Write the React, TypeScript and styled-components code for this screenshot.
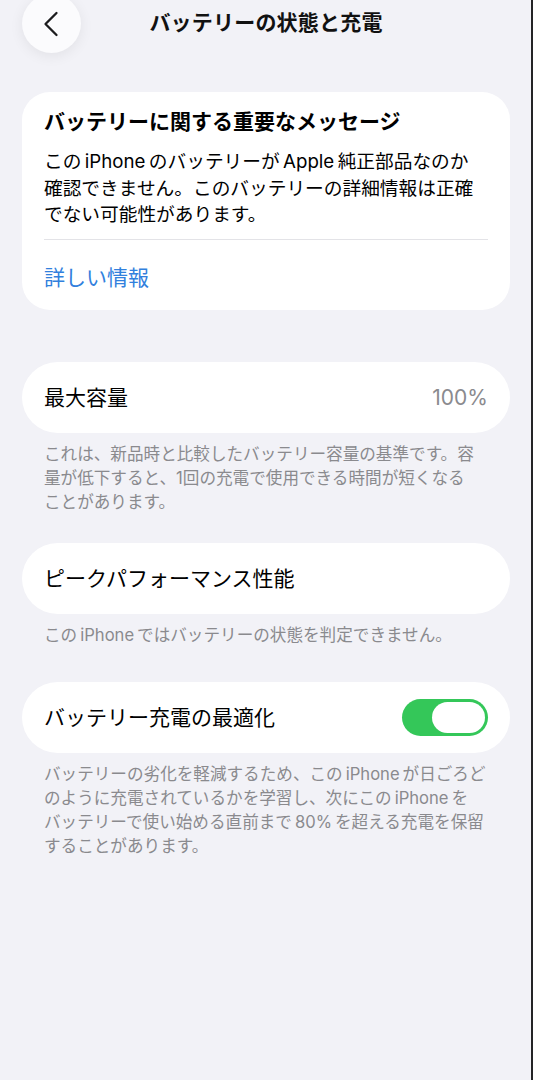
import React from "react";
import styled, { createGlobalStyle } from "styled-components";

const GlobalStyle = createGlobalStyle`
  html, body {
    margin: 0;
    padding: 0;
    background: #f2f2f7;
  }
  body {
    font-family: "Inter", "Noto Sans CJK JP", "Noto Sans", sans-serif;
    color: #000;
    -webkit-font-smoothing: antialiased;
  }
`;

const Page = styled.div`
  box-sizing: border-box;
  min-height: 100vh;
  padding: 0 21px 0 22px;
  background: #f2f2f7;
  border-right: 2px solid #242426;
  overflow: hidden;
`;

const Header = styled.header`
  display: grid;
  grid-template-columns: 1fr auto 1fr;
  grid-template-rows: 48px;
  align-items: center;
  height: 48px;
`;

const BackButton = styled.button`
  width: 59px;
  height: 59px;
  padding: 0 2px 0 0;
  border: none;
  border-radius: 50%;
  background: #fbfbfd;
  box-shadow: 0 3px 14px rgba(0, 0, 0, 0.07);
  display: flex;
  align-items: center;
  justify-content: center;
  justify-self: start;
  margin-top: -1px;
`;

const NavTitle = styled.h1`
  margin: 0;
  font-size: 21px;
  font-weight: 700;
  letter-spacing: 0.2px;
  line-height: 28px;
  color: #111;
  margin-top: -2px;
`;

const Card = styled.section<{ $top: number }>`
  margin-top: ${(p) => p.$top}px;
  background: #fff;
  border-radius: 28px;
  padding: 16px 22px 0;
`;

const CardTitle = styled.h2`
  margin: 0;
  font-size: 21px;
  font-weight: 700;
  line-height: 28px;
  color: #000;
`;

const CardBody = styled.p`
  margin: 13px 0 0;
  font-size: 18.7px;
  line-height: 26.7px;
  color: #000;
  white-space: nowrap;
`;

const Divider = styled.div`
  height: 1px;
  background: #e3e3e7;
  margin-top: 10px;
`;

const LinkRow = styled.a`
  display: block;
  padding: 25px 0 19px;
  font-size: 21px;
  line-height: 26px;
  color: #3180dd;
  text-decoration: none;
`;

const Row = styled.div<{ $top: number }>`
  margin-top: ${(p) => p.$top}px;
  height: 71px;
  border-radius: 35.5px;
  background: #fff;
  padding: 0 22px;
  display: flex;
  align-items: center;
  justify-content: space-between;
`;

const RowLabel = styled.span`
  font-size: 21px;
  line-height: 28px;
  color: #000;
`;

const RowValue = styled.span`
  font-size: 21px;
  line-height: 28px;
  color: #8a8a8e;
`;

const Footer = styled.p`
  margin: 9px 0 0;
  padding: 0 22px;
  font-size: 16.6px;
  line-height: 24px;
  color: #8a8a8e;
  white-space: nowrap;
`;

const Toggle = styled.div<{ $on: boolean }>`
  box-sizing: border-box;
  width: 86px;
  height: 37px;
  border-radius: 18.5px;
  padding: 3px;
  background: ${(p) => (p.$on ? "#34c759" : "#e9e9eb")};
  display: flex;
  justify-content: ${(p) => (p.$on ? "flex-end" : "flex-start")};
`;

const Knob = styled.div`
  width: 53px;
  height: 31px;
  border-radius: 15.5px;
  background: #fff;
`;

const Chevron = () => (
  <svg width="16" height="26" viewBox="0 0 16 26" fill="none">
    <path
      d="M13.5 2 L2.5 13 L13.5 24"
      stroke="#1c1c1e"
      strokeWidth="2.3"
      strokeLinecap="round"
      strokeLinejoin="round"
    />
  </svg>
);

export default function App() {
  return (
    <>
      <GlobalStyle />
      <Page>
        <Header>
          <BackButton aria-label="戻る">
            <Chevron />
          </BackButton>
          <NavTitle>バッテリーの状態と充電</NavTitle>
          <span />
        </Header>

        <Card $top={44}>
          <CardTitle>バッテリーに関する重要なメッセージ</CardTitle>
          <CardBody>
            この{"\u2009"}iPhone{"\u2009"}のバッテリーが{"\u2009"}Apple{"\u2009"}純正部品なのか
            <br />
            確認できません。このバッテリーの詳細情報は正確
            <br />
            でない可能性があります。
          </CardBody>
          <Divider />
          <LinkRow href="#">詳しい情報</LinkRow>
        </Card>

        <Row $top={52}>
          <RowLabel>最大容量</RowLabel>
          <RowValue>100%</RowValue>
        </Row>
        <Footer>
          これは、新品時と比較したバッテリー容量の基準です。容
          <br />
          量が低下すると、1回の充電で使用できる時間が短くなる
          <br />
          ことがあります。
        </Footer>

        <Row $top={29}>
          <RowLabel>ピークパフォーマンス性能</RowLabel>
        </Row>
        <Footer>この{"\u2009"}iPhone{"\u2009"}ではバッテリーの状態を判定できません。</Footer>

        <Row $top={35}>
          <RowLabel>バッテリー充電の最適化</RowLabel>
          <Toggle $on>
            <Knob />
          </Toggle>
        </Row>
        <Footer>
          バッテリーの劣化を軽減するため、この{"\u2009"}iPhone{"\u2009"}が日ごろど
          <br />
          のように充電されているかを学習し、次にこの{"\u2009"}iPhone{"\u2009"}を
          <br />
          バッテリーで使い始める直前まで{"\u2009"}80%{"\u2009"}を超える充電を保留
          <br />
          することがあります。
        </Footer>
      </Page>
    </>
  );
}
